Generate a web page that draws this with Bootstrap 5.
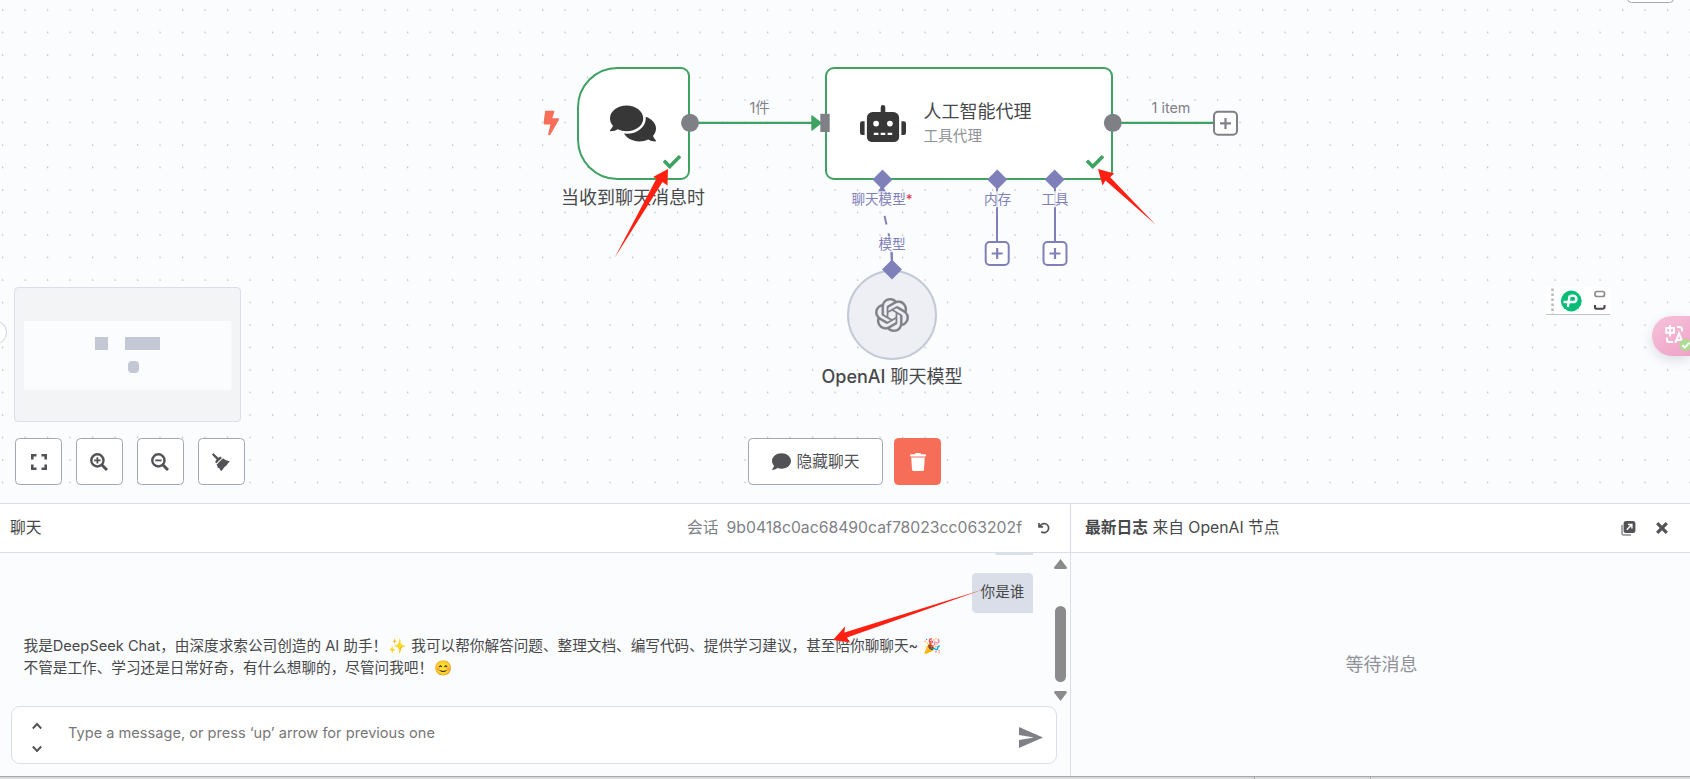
<!DOCTYPE html>
<html lang="zh-CN">
<head>
  <meta charset="UTF-8">
  <meta name="viewport" content="width=device-width, initial-scale=1">
  <title>工作流编辑器</title>
  <link href="https://cdn.jsdelivr.net/npm/bootstrap@5.3.3/dist/css/bootstrap.min.css" rel="stylesheet">
  <style>
    body {
      height: 779px;
      overflow: hidden;
      background: #fbfcfe;
      color: #47484a;
      font-family: Inter, "Noto Sans CJK SC", sans-serif;
      font-size: 15.75px;
      font-weight: 400;
    }
    svg { display: block; }

    /* Canvas */
    .flow-canvas {
      height: 503px;
      background-color: #fbfcfe;
      background-image: radial-gradient(circle at 2.6px 10px, #bcbec3 0.5px, transparent 1.1px);
      background-size: 22.5px 22.5px;
    }
    .flow-wires { left: 0; top: 0; }
    .flow-node {
      background: #fff;
      border: 2px solid #40a262;
      border-radius: 9px;
      top: 67px;
      height: 112.5px;
      color: #373737;
    }
    .node-trigger { left: 577px; width: 113px; border-radius: 40.5px 9px 9px 40.5px; }
    .node-trigger .node-icon { margin-right: 1.5px; }
    .node-agent { left: 824.6px; width: 288px; padding-left: 33px; }
    .node-model {
      left: 847px;
      top: 269.5px;
      width: 90px;
      height: 90px;
      border-color: #c3c9d5;
      background: #eeeff5;
      color: #7f8086;
    }
    .node-check { right: 7px; bottom: 7px; color: #40a262; }
    .node-text { margin-left: 18px; }
    .node-title { font-size: 18px; line-height: 26px; color: #47484a; }
    .node-sub { font-size: 14.6px; line-height: 22px; color: #909298; }
    .flow-label { transform: translate(-50%, -50%); white-space: nowrap; line-height: 1; }
    .port-label { font-size: 13.6px; color: #7f80b9; }
    .port-label span { background: rgba(251, 252, 254, 0.8); }
    .edge-label { font-size: 14.4px; color: #7e8186; }

    .mini-map {
      left: 14px;
      top: 287px;
      width: 227px;
      height: 135px;
      border: 1px solid #d9dee8;
      border-radius: 4px;
      background: #f3f4f6;
    }
    .tool-row { left: 15px; top: 438px; gap: 14px; }
    .zoom-icon { margin-right: 1px; }
    .chat-row { left: 748px; top: 438px; gap: 11px; }
    .tool-btn {
      width: 47px;
      height: 47px;
      padding: 0;
      background: #fff;
      border: 1px solid #a3a7b5;
      border-radius: 4.5px;
      color: #525356;
    }
    .tool-btn.wide { width: 135px; font-size: 15.75px; gap: 6px; }
    .tool-btn.danger { background: #f76e58; border-color: #f76e58; color: #fff; }
    .side-knob {
      left: -15px;
      top: 321px;
      width: 22px;
      height: 23px;
      border: 1px solid #d5d8e3;
      background: #fff;
    }
    .top-btn {
      left: 1627px;
      top: -30px;
      width: 47px;
      height: 33px;
      border: 1px solid #a3a7b5;
      border-radius: 4.5px;
      background: #fff;
    }
    .ext-bar {
      left: 1546px;
      top: 287px;
      width: 64px;
      height: 28px;
      background: #fff;
      border-bottom: 1px solid #c2c3c6;
    }
    .ext-pill {
      right: 0;
      top: 316px;
      width: 38px;
      height: 40px;
      border-radius: 20px 0 0 20px;
      background: linear-gradient(150deg, #f6c2dc, #efa3c6);
      box-shadow: 0 4px 12px rgba(90, 100, 130, 0.2);
    }

    /* Bottom panels */
    .bottom-panels { height: 273px; border-top: 1px solid #d9dee8; }
    .chat-panel { width: 1071px; border-right: 1px solid #d9dee8; }
    .panel-head {
      height: 49px;
      padding: 0 20px 0 10px;
      background: #fff;
      border-bottom: 1px solid #d9dee8;
    }
    .log-head { padding: 0 22px 0 14px; }
    .session { color: #7e8186; }
    .chat-body { height: 153px; }
    .msg-list { padding: 0 37px 0 23.5px; font-size: 14.63px; line-height: 22px; }
    .prev-bubble { width: 38px; height: 2px; background: #d9dee8; border-radius: 0 0 0 4px; }
    .user-bubble {
      width: 61px;
      height: 40px;
      margin-top: 18px;
      padding-top: 8px;
      background: #d9dee8;
      border-radius: 4.5px 4.5px 0 4.5px;
    }
    .bot-msg { margin-top: 22px; white-space: nowrap; }
    .emoji-gap { margin: 0 1px; }
    .chat-scroll { right: 3px; top: 6px; width: 13px; }
    .scroll-thumb { width: 11px; height: 76px; margin: 37px 0 9px; border-radius: 6px; background: #8b8b8b; }
    .chat-input {
      width: 1046px;
      height: 58px;
      margin-left: 11px;
      padding: 4px 13px 0 20px;
      border: 1px solid #d9dee8;
      border-radius: 9px;
      background: #fff;
    }
    .input-hint { padding: 0 0 7px 26px; font-size: 14.6px; color: #777; }
    .waiting { font-size: 18px; color: #909298; padding-left: 2px; }
    .status-edge { height: 3px; background: #d9dadb; border-top: 1px solid #a6a9aa; }
    .arrow-layer { left: 0; top: 0; pointer-events: none; z-index: 10; }
  </style>
</head>

<body class="position-relative">

  <!-- Canvas -->
  <div class="flow-canvas position-relative overflow-hidden">
    <div class="flow-node node-trigger position-absolute d-flex align-items-center justify-content-center">
      <svg class="node-icon" width="46" height="41" viewBox="0 0 576 512" fill="currentColor"><path d="M416 192c0-88.4-93.1-160-208-160S0 103.6 0 192c0 34.3 14.1 65.9 38 92-13.4 30.2-35.5 54.2-35.8 54.5-2.2 2.3-2.8 5.7-1.5 8.7S4.8 352 8 352c36.6 0 66.9-12.3 88.7-25 32.2 15.7 70.3 25 111.3 25 114.9 0 208-71.6 208-160zm122 220c23.9-26 38-57.7 38-92 0-66.9-53.5-124.2-129.3-148.1.9 6.6 1.3 13.3 1.3 20.1 0 105.9-107.7 192-240 192-10.8 0-21.3-.8-31.7-1.9C207.8 439.6 281.8 480 368 480c41 0 79.1-9.2 111.3-25 21.8 12.7 52.1 25 88.7 25 3.2 0 6.1-1.9 7.3-4.8 1.3-2.9.7-6.3-1.5-8.7-.3-.3-22.4-24.2-35.8-54.5z"/></svg>
      <svg class="node-check position-absolute" width="18" height="18" viewBox="0 0 512 512" fill="currentColor"><path d="M173.898 439.404l-166.4-166.4c-9.997-9.997-9.997-26.206 0-36.204l36.203-36.204c9.997-9.998 26.207-9.998 36.204 0L192 312.69 432.095 72.596c9.997-9.997 26.207-9.997 36.204 0l36.203 36.204c9.997 9.997 9.997 26.206 0 36.204l-294.4 294.401c-9.998 9.997-26.207 9.997-36.204-.001z"/></svg>
    </div>
    <div class="flow-node node-agent position-absolute d-flex align-items-center">
      <svg width="46" height="37" viewBox="0 0 640 512" fill="currentColor"><path d="M32,224H64V416H32A31.96,31.96,0,0,1,0,384V256A31.96,31.96,0,0,1,32,224Zm512-48V448a64.06,64.06,0,0,1-64,64H160a64.06,64.06,0,0,1-64-64V176a79.97,79.97,0,0,1,80-80H288V32a32,32,0,0,1,64,0V96H464A79.97,79.97,0,0,1,544,176ZM264,256a40,40,0,1,0-40,40A40,40,0,0,0,264,256Zm-8,128H192v32h64Zm96,0H288v32h64ZM456,256a40,40,0,1,0-40,40A40,40,0,0,0,456,256Zm-8,128H384v32h64ZM640,256V384a31.96,31.96,0,0,1-32,32H576V224h32A31.96,31.96,0,0,1,640,256Z"/></svg>
      <div class="node-text">
        <div class="node-title">人工智能代理</div>
        <div class="node-sub">工具代理</div>
      </div>
      <svg class="node-check position-absolute" width="18" height="18" viewBox="0 0 512 512" fill="currentColor"><path d="M173.898 439.404l-166.4-166.4c-9.997-9.997-9.997-26.206 0-36.204l36.203-36.204c9.997-9.998 26.207-9.998 36.204 0L192 312.69 432.095 72.596c9.997-9.997 26.207-9.997 36.204 0l36.203 36.204c9.997 9.997 9.997 26.206 0 36.204l-294.4 294.401c-9.998 9.997-26.207 9.997-36.204-.001z"/></svg>
    </div>
    <div class="flow-node node-model rounded-circle position-absolute d-flex align-items-center justify-content-center">
      <svg width="34" height="34" viewBox="0 0 24 24" fill="currentColor" stroke="currentColor" stroke-width="0.15"><path d="M22.2819 9.8211a5.9847 5.9847 0 0 0-.5157-4.9108 6.0462 6.0462 0 0 0-6.5098-2.9A6.0651 6.0651 0 0 0 4.9807 4.1818a5.9847 5.9847 0 0 0-3.9977 2.9 6.0462 6.0462 0 0 0 .7427 7.0966 5.98 5.98 0 0 0 .511 4.9107 6.051 6.051 0 0 0 6.5146 2.9001A5.9847 5.9847 0 0 0 13.2599 24a6.0557 6.0557 0 0 0 5.7718-4.2058 5.9894 5.9894 0 0 0 3.9977-2.9001 6.0557 6.0557 0 0 0-.7475-7.0729zm-9.022 12.6081a4.4755 4.4755 0 0 1-2.8764-1.0408l.1419-.0804 4.7783-2.7582a.7948.7948 0 0 0 .3927-.6813v-6.7369l2.02 1.1686a.071.071 0 0 1 .038.052v5.5826a4.504 4.504 0 0 1-4.4945 4.4944zm-9.6607-4.1254a4.4708 4.4708 0 0 1-.5346-3.0137l.142.0852 4.783 2.7582a.7712.7712 0 0 0 .7806 0l5.8428-3.3685v2.3324a.0804.0804 0 0 1-.0332.0615L9.74 19.9502a4.4992 4.4992 0 0 1-6.1408-1.6464zM2.3408 7.8956a4.485 4.485 0 0 1 2.3655-1.9728V11.6a.7664.7664 0 0 0 .3879.6765l5.8144 3.3543-2.0201 1.1685a.0757.0757 0 0 1-.071 0l-4.8303-2.7865A4.504 4.504 0 0 1 2.3408 7.872zm16.5963 3.8558L13.1038 8.364 15.1192 7.2a.0757.0757 0 0 1 .071 0l4.8303 2.7913a4.4944 4.4944 0 0 1-.6765 8.1042v-5.6772a.79.79 0 0 0-.407-.667zm2.0107-3.0231l-.142-.0852-4.7735-2.7818a.7759.7759 0 0 0-.7854 0L9.409 9.2297V6.8974a.0662.0662 0 0 1 .0284-.0615l4.8303-2.7866a4.4992 4.4992 0 0 1 6.6802 4.66zM8.3065 12.863l-2.02-1.1638a.0804.0804 0 0 1-.038-.0567V6.0742a4.4992 4.4992 0 0 1 7.3757-3.4537l-.142.0805L8.704 5.459a.7948.7948 0 0 0-.3927.6813zm1.0976-2.3654l2.602-1.4998 2.6069 1.4998v2.9994l-2.5974 1.4997-2.6067-1.4997Z"/></svg>
    </div>

    <!-- Wires, ports and plus handles -->
    <svg class="flow-wires position-absolute" width="1690" height="503" fill="none">
      <g stroke="#40a262" stroke-width="2.25">
        <path d="M690 122.8H812M1112 122.8H1213"/>
        <path d="M812 116V130L821 123Z" fill="#40a262" stroke-width="1.5" stroke-linejoin="round"/>
      </g>
      <g stroke="#7f80b9" stroke-width="2">
        <path d="M997 180V241M1055 180V241"/>
        <path d="M882.5 198C883 222 892 232 892 268" stroke-dasharray="9 9"/>
        <path d="M891.8 251V268"/>
        <path d="M882 185L887.5 194H876.5Z" fill="#7f80b9" stroke="none"/>
      </g>
      <g fill="#7f8086">
        <circle cx="690" cy="122.8" r="9"/>
        <circle cx="1112.8" cy="122.8" r="9"/>
        <path d="M820.3 113.8h9.4v18.2h-9.4z"/>
      </g>
      <g fill="#7f80b9">
        <path d="M882.5 169.5l10 10-10 10-10-10zM997.3 169.5l10 10-10 10-10-10zM1054.6 169.5l10 10-10 10-10-10zM892 259.5l10 10-10 10-10-10z"/>
      </g>
      <g fill="#fff" stroke-width="2">
        <g stroke="#7f8086"><rect x="1214" y="111.7" width="23" height="23" rx="4"/><path d="M1225.5 118v11M1220 123.3h11" stroke-width="2.2"/></g>
        <g stroke="#7f80b9"><rect x="985.7" y="242" width="23" height="23" rx="4"/><path d="M997.2 248v11M991.7 253.5h11" stroke-width="2.2"/></g>
        <g stroke="#7f80b9"><rect x="1043.5" y="242" width="23" height="23" rx="4"/><path d="M1055 248v11M1049.5 253.5h11" stroke-width="2.2"/></g>
      </g>
      <svg x="543.5" y="110.5" width="15.5" height="25" viewBox="0 0 320 512"><path fill="#f76e58" d="M296 160H180.6l42.6-129.8C227.2 15 215.7 0 200 0H56C44 0 33.8 8.9 32.2 20.8l-32 240C-1.7 275.2 9.5 288 24 288h118.7L96.6 482.5c-3.6 15.2 8 29.5 23.3 29.5 8.4 0 16.4-4.4 20.8-12l176-304c9.3-15.9-2.2-36-20.7-36z"/></svg>
    </svg>

    <div class="flow-label node-title position-absolute" style="left:633px;top:198px">当收到聊天消息时</div>
    <div class="flow-label node-title position-absolute" style="left:892px;top:377px"><span class="fw-medium">OpenAI</span> 聊天模型</div>
    <div class="flow-label edge-label position-absolute" style="left:759.5px;top:107.5px">1件</div>
    <div class="flow-label edge-label position-absolute" style="left:1171px;top:107.5px">1 item</div>
    <div class="flow-label port-label position-absolute" style="left:882px;top:199.5px"><span>聊天模型</span><b class="text-danger fw-normal">*</b></div>
    <div class="flow-label port-label position-absolute" style="left:997.5px;top:199.5px"><span>内存</span></div>
    <div class="flow-label port-label position-absolute" style="left:1055px;top:199.5px"><span>工具</span></div>
    <div class="flow-label port-label position-absolute" style="left:892px;top:244.5px"><span>模型</span></div>

    <!-- Minimap -->
    <div class="mini-map position-absolute">
      <svg width="225" height="133" fill="#c4c8d5">
        <path fill="#fbfcfe" d="M9 33h207.5v69H9z"/>
        <path d="M80 49h13v13H80zM110 49h35v13h-35z"/>
        <rect x="113" y="73" width="11" height="12" rx="4"/>
      </svg>
    </div>
    <div class="side-knob rounded-circle position-absolute"></div>
    <div class="top-btn position-absolute"></div>

    <div class="tool-row position-absolute d-flex">
      <button class="btn tool-btn d-flex align-items-center justify-content-center">
        <svg width="16" height="16" fill="none" stroke="currentColor" stroke-width="2.6"><path d="M1.3 5.5V1.3H5.5M10.5 1.3h4.2V5.5M14.7 10.5v4.2h-4.2M5.5 14.7H1.3v-4.2"/></svg>
      </button>
      <button class="btn tool-btn d-flex align-items-center justify-content-center">
        <svg class="zoom-icon" width="18" height="18" fill="none" stroke="currentColor" stroke-width="2.4"><circle cx="7.4" cy="7.4" r="6.1"/><path d="M12 12l5 5" stroke-width="3"/><path d="M4.2 7.4h6.4M7.4 4.2v6.4" stroke-width="1.8"/></svg>
      </button>
      <button class="btn tool-btn d-flex align-items-center justify-content-center">
        <svg class="zoom-icon" width="18" height="18" fill="none" stroke="currentColor" stroke-width="2.4"><circle cx="7.4" cy="7.4" r="6.1"/><path d="M12 12l5 5" stroke-width="3"/><path d="M4.2 7.4h6.4" stroke-width="1.8"/></svg>
      </button>
      <button class="btn tool-btn d-flex align-items-center justify-content-center">
        <svg class="zoom-icon" width="18" height="18" fill="currentColor"><path d="M1.2 0L6.4 4.8 8.4 3.4 9.8 4.9 4.5 10.2 3.1 8.9 4.6 6.5 0 1.7z"/><path d="M10.9 5.3L13.5 7 17.8 8.6 16 10.2 14.5 12.5 12.5 14 9.5 18 8 17 7.2 14.8 5.8 15.2 5.4 13 4.5 11.7z"/></svg>
      </button>
    </div>

    <div class="chat-row position-absolute d-flex">
      <button class="btn tool-btn wide d-flex align-items-center justify-content-center">
        <svg width="19" height="19" viewBox="0 0 512 512" fill="currentColor"><path d="M256 32C114.6 32 0 125.1 0 240c0 49.6 21.4 95 57 130.7C44.5 421.1 2.7 466 2.2 466.5c-2.2 2.3-2.8 5.7-1.5 8.7S4.8 480 8 480c66.3 0 116-31.8 140.6-51.4 32.7 12.3 69 19.4 107.4 19.4 141.4 0 256-93.1 256-208S397.4 32 256 32z"/></svg>
        <span>隐藏聊天</span>
      </button>
      <button class="btn tool-btn danger d-flex align-items-center justify-content-center">
        <svg width="16" height="18" viewBox="0 0 448 512" fill="currentColor"><path d="M432 32H312l-9.4-18.7A24 24 0 0 0 281.1 0H166.8a23.72 23.72 0 0 0-21.4 13.3L136 32H16A16 16 0 0 0 0 48v32a16 16 0 0 0 16 16h416a16 16 0 0 0 16-16V48a16 16 0 0 0-16-16zM53.2 467a48 48 0 0 0 47.9 45h245.8a48 48 0 0 0 47.9-45L416 128H32z"/></svg>
      </button>
    </div>

    <!-- Browser extension widgets floating over the canvas -->
    <div class="ext-bar position-absolute">
      <svg width="64" height="27" fill="none">
        <path d="M6.5 1.5V27" stroke="#b9babd" stroke-width="2.5" stroke-dasharray="2.5 2.5"/>
        <circle cx="25.3" cy="14" r="10.4" fill="#06bd78"/>
        <path d="M18.5 15H28a3.2 3.2 0 0 0 0-6.2H25.5M23.5 9.5L22 19" stroke="#fff" stroke-width="2.4" stroke-linecap="round"/>
        <rect x="49" y="4.5" width="9.5" height="5" rx="2" stroke="#8f8a8a" stroke-width="1.7"/>
        <path d="M49 18V20.5Q49 21.8 51 21.8H56.5Q58.5 21.8 58.5 20V18" stroke="#4d4545" stroke-width="2"/>
      </svg>
    </div>
    <div class="ext-pill position-absolute">
      <svg width="38" height="40" fill="none" stroke="#fff" stroke-width="2">
        <path d="M14.2 12h7.8v4.8h-7.8zM18.1 9v11.5M25 11h2.5Q30 11 30 13.5V15.5M15 21.5V23.5Q15 26 17.5 26H21"/>
        <path d="M23.2 27l3.8-9.5 3.8 9.5M24.5 24h5"/>
        <circle cx="33.5" cy="29" r="6" fill="#a9dd91" stroke="none"/>
        <path d="M30.3 29l2.5 2.6 4.5-5"/>
      </svg>
    </div>
  </div>

  <!-- Chat and log panels -->
  <div class="bottom-panels d-flex">
    <div class="chat-panel flex-shrink-0">
      <div class="panel-head d-flex align-items-center">
        <span>聊天</span>
        <span class="session ms-auto">会话</span>
        <span class="session ms-2">9b0418c0ac68490caf78023cc063202f</span>
        <svg class="ms-3" width="12" height="12" fill="none" stroke="#525356" stroke-width="1.7"><path d="M1 1v3.8h4M1.5 4.5Q3.5 1.5 6.5 1.5A4.6 4.6 0 1 1 3.3 9.8"/></svg>
      </div>
      <div class="chat-body position-relative overflow-hidden">
        <div class="msg-list d-flex flex-column">
          <div class="prev-bubble align-self-end"></div>
          <div class="user-bubble align-self-end text-center">你是谁</div>
          <div class="bot-msg">
            <div>我是DeepSeek Chat，由深度求索公司创造的 AI 助手！<span class="emoji-gap">✨</span> 我可以帮你解答问题、整理文档、编写代码、提供学习建议，甚至陪你聊聊天~ <span class="emoji-gap">🎉</span></div>
            <div>不管是工作、学习还是日常好奇，有什么想聊的，尽管问我吧！<span class="emoji-gap">😊</span></div>
          </div>
        </div>
        <div class="chat-scroll position-absolute d-flex flex-column align-items-center">
          <svg width="13" height="10"><path fill="#8b8b8b" d="M6.5 0L13 8.5Q13 10 11.5 10H1.5Q0 10 0 8.5z"/></svg>
          <div class="scroll-thumb"></div>
          <svg width="13" height="10"><path fill="#8b8b8b" d="M6.5 10L13 1.5Q13 0 11.5 0H1.5Q0 0 0 1.5z"/></svg>
        </div>
      </div>
      <div class="chat-input d-flex align-items-center">
        <svg width="10" height="30" fill="none" stroke="#525356" stroke-width="1.9"><path d="M.8 6.5L5 2 9.2 6.5M.8 24.5L5 29l4.2-4.5"/></svg>
        <span class="input-hint flex-grow-1">Type a message, or press ‘up’ arrow for previous one</span>
        <svg width="24" height="21" fill="#7f8086"><path d="M0 0L24 10.5 0 21V13L15 10.5 0 8z"/></svg>
      </div>
    </div>

    <div class="flex-grow-1 d-flex flex-column">
      <div class="panel-head log-head d-flex align-items-center">
        <span><b>最新日志</b> 来自 OpenAI 节点</span>
        <svg class="ms-auto me-1" width="15" height="15" fill="none"><path d="M1 4v8.5Q1 14 2.5 14H10" stroke="#8a8b8e" stroke-width="1.5"/><rect x="2.6" y="0" width="11.8" height="12" rx="2.5" fill="#525356"/><path d="M5.8 8.8l4.8-5M7 3.5h3.9v4" stroke="#fff" stroke-width="1.4"/></svg>
        <svg class="ms-3" width="12" height="12" stroke="#525356" stroke-width="3.2"><path d="M1.2 1.2l9.6 9.6M10.8 1.2l-9.6 9.6"/></svg>
      </div>
      <div class="waiting flex-grow-1 d-flex align-items-center justify-content-center">等待消息</div>
    </div>
  </div>
  <div class="status-edge">
    <svg width="1690" height="2" stroke="#a6a9aa"><path d="M1254.5 0v2M1370.5 0v2"/></svg>
  </div>

  <!-- Red annotation arrows -->
  <svg class="arrow-layer position-absolute" width="1690" height="779" fill="#ff2012">
    <path d="M668 169L667.5 185.5 662.5 182 614.5 258 656.5 178.5 653 177z"/>
    <path d="M1098 169L1114.3 173.5 1110 177 1155.5 224.5 1105.5 180.5 1102.5 185.5z"/>
    <path d="M833 640L845 626.5 844.5 632.5 983 589.5 847 637.5 850 642.5z"/>
  </svg>

  <script src="https://cdn.jsdelivr.net/npm/bootstrap@5.3.3/dist/js/bootstrap.bundle.min.js"></script>
</body>
</html>
